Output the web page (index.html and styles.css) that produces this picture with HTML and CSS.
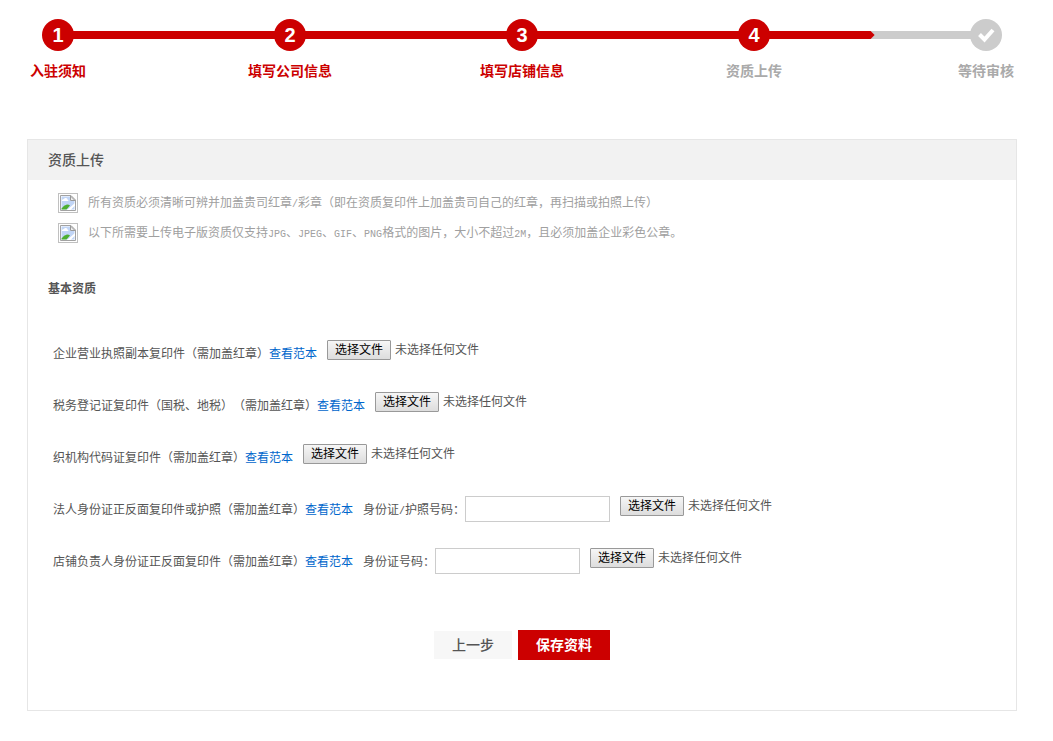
FILE: index.html
```html
<!DOCTYPE html>
<html lang="zh-CN">
<head>
<meta charset="utf-8">
<title>资质上传</title>
<link rel="stylesheet" href="styles.css">
</head>
<body>
<svg class="sprite" aria-hidden="true">
  <symbol id="picture" viewBox="0 0 20 20">
    <rect x=".5" y=".5" width="19" height="19" fill="#fff" stroke="#c0c0c0"/>
    <path d="M2.500 2.500H13L17.500 7V17.500H2.500Z" fill="#fff" stroke="#a2a2a2"/>
    <path d="M3.500 3.500H12V8H16.500V16.500H3.500Z" fill="#c1d5f6"/>
    <path d="M4 8V7Q5 6 6 6Q6.500 4.500 8 5Q9.500 5 9.500 6.500Q10.500 7 10.500 8Z" fill="#fff"/>
    <path d="M3.500 16.500V15.500Q6 12 9 11.500Q11 11.500 12 12.500L8.500 16.500Z" fill="#4caf30"/>
    <path d="M12.500 3V7.500H17Z" fill="#eee" stroke="#999"/>
    <path d="M9 17L17 10V12.500L12.500 17Z" fill="#fff"/>
  </symbol>
</svg>
<nav class="progress" aria-label="入驻进度">
  <div class="track"><div class="track-fill" style="width: 88%"></div></div>
  <ol class="steps">
    <li class="step done"><span class="dot">1</span><span class="step-name">入驻须知</span></li>
    <li class="step done"><span class="dot">2</span><span class="step-name">填写公司信息</span></li>
    <li class="step done"><span class="dot">3</span><span class="step-name">填写店铺信息</span></li>
    <li class="step" aria-current="step"><span class="dot">4</span><span class="step-name">资质上传</span></li>
    <li class="step waiting"><span class="dot"><svg viewBox="0 0 32 32" width="32" height="32" aria-hidden="true"><path d="M9.500 15.500L14.500 20.500L23 11" fill="none" stroke="#fff" stroke-width="4"/></svg></span><span class="step-name">等待审核</span></li>
  </ol>
</nav>
<main class="panel">
  <h1 class="panel-title">资质上传</h1>
  <ul class="notes">
    <li class="note"><svg class="note-icon" aria-hidden="true"><use href="#picture"/></svg><p>所有资质必须清晰可辨并加盖贵司红章<span class="half">/</span>彩章（即在资质复印件上加盖贵司自己的红章，再扫描或拍照上传）</p></li>
    <li class="note"><svg class="note-icon" aria-hidden="true"><use href="#picture"/></svg><p>以下所需要上传电子版资质仅支持<span class="half">JPG</span>、<span class="half">JPEG</span>、<span class="half">GIF</span>、<span class="half">PNG</span>格式的图片，大小不超过<span class="half">2M</span>，且必须加盖企业彩色公章。</p></li>
  </ul>
  <form class="form">
    <h2 class="section-title">基本资质</h2>
    <div class="rows">
      <div class="row">
        <div class="row-text"><span id="doc1">企业营业执照副本复印件（需加盖红章）</span><a href="#sample1">查看范本</a></div>
        <label class="file"><input type="file" aria-describedby="doc1"><span class="file-button">选择文件</span><span>未选择任何文件</span></label>
      </div>
      <div class="row">
        <div class="row-text"><span id="doc2">税务登记证复印件（国税、地税）（需加盖红章）</span><a href="#sample2">查看范本</a></div>
        <label class="file"><input type="file" aria-describedby="doc2"><span class="file-button">选择文件</span><span>未选择任何文件</span></label>
      </div>
      <div class="row">
        <div class="row-text"><span id="doc3">织机构代码证复印件（需加盖红章）</span><a href="#sample3">查看范本</a></div>
        <label class="file"><input type="file" aria-describedby="doc3"><span class="file-button">选择文件</span><span>未选择任何文件</span></label>
      </div>
      <div class="row">
        <div class="row-text"><span id="doc4">法人身份证正反面复印件或护照（需加盖红章）</span><a href="#sample4">查看范本</a></div>
        <div class="field"><label for="owner-id">身份证<span class="half">/</span>护照号码：</label><input class="text-box" type="text" id="owner-id"></div>
        <label class="file"><input type="file" aria-describedby="doc4"><span class="file-button">选择文件</span><span>未选择任何文件</span></label>
      </div>
      <div class="row">
        <div class="row-text"><span id="doc5">店铺负责人身份证正反面复印件（需加盖红章）</span><a href="#sample5">查看范本</a></div>
        <div class="field"><label for="manager-id">身份证号码：</label><input class="text-box" type="text" id="manager-id"></div>
        <label class="file"><input type="file" aria-describedby="doc5"><span class="file-button">选择文件</span><span>未选择任何文件</span></label>
      </div>
    </div>
    <div class="actions">
      <button class="button" type="button">上一步</button>
      <button class="button primary" type="submit">保存资料</button>
    </div>
  </form>
</main>
</body>
</html>
```
FILE: styles.css
```css
* {
  box-sizing: border-box;
}

body {
  margin: 0;
  padding: 19px 36px 30px 27px;
  background: #fff;
  color: #555;
  font: 12px/20px "Liberation Sans", "Noto Sans CJK SC", sans-serif;
  text-spacing-trim: space-all;
}

h1, h2, p, ul, ol {
  margin: 0;
  padding: 0;
  list-style: none;
}

a {
  color: #0066cc;
  text-decoration: none;
}

.sprite {
  display: none;
}

.progress {
  display: grid;
  margin: 0 -13px 58px;
}

.track,
.steps {
  grid-area: 1 / 1;
}

.track {
  height: 8px;
  margin: 12px 44px 0;
  background: #ccc;
}

.track-fill {
  height: 100%;
  background: #c00;
  clip-path: polygon(0 0, calc(100% - 4px) 0, 100% 50%, calc(100% - 4px) 100%, 0 100%);
}

.steps {
  z-index: 1;
  display: flex;
  justify-content: space-between;
}

.step {
  display: flex;
  flex-direction: column;
  align-items: center;
  gap: 10px;
  width: 88px;
  color: #aaa;
  font-size: 14px;
  font-weight: bold;
  white-space: nowrap;
}

.done {
  color: #c00;
}

.dot {
  display: flex;
  align-items: center;
  justify-content: center;
  width: 32px;
  height: 32px;
  border-radius: 50%;
  background: #c00;
  color: #fff;
  font-size: 20px;
}

.waiting .dot {
  background: #ccc;
}

.panel {
  border: 1px solid #e6e6e6;
}

.panel-title {
  padding: 0 20px;
  background: #f2f2f2;
  font-size: 14px;
  font-weight: 500;
  line-height: 40px;
}

.notes {
  padding: 8px 30px 0;
  color: #a0a0a0;
  line-height: 30px;
}

.note {
  display: flex;
  align-items: center;
  gap: 10px;
}

.note-icon {
  flex: none;
  width: 20px;
  height: 20px;
}

.half {
  font-family: "Liberation Mono", monospace;
  font-size: 10px;
  line-height: 1;
}

.form {
  padding: 31px 20px 50px;
}

.section-title {
  font-size: 12px;
  font-weight: bold;
}

.rows {
  display: grid;
  gap: 24px;
  padding: 41px 5px 54px;
}

.row {
  display: flex;
  flex-wrap: wrap;
  align-items: flex-start;
  gap: 10px;
  line-height: 28px;
}

.field {
  display: flex;
  align-items: flex-start;
}

.text-box {
  width: 145px;
  height: 26px;
  padding: 0 4px;
  border: 1px solid #ccc;
  font: inherit;
}

.file {
  display: flex;
  gap: 4px;
  line-height: 20px;
}

.file input {
  position: absolute;
  width: 1px;
  height: 1px;
  opacity: 0;
}

.file-button {
  padding: 0 7px;
  border: 1px solid #999;
  border-radius: 1px;
  background: linear-gradient(#f6f6f6, #ddd);
  color: #000;
  line-height: 18px;
}

.file input:focus-visible + .file-button {
  outline: 2px solid #06c;
}

.actions {
  display: flex;
  align-items: center;
  justify-content: center;
  gap: 6px;
}

.button {
  padding: 0 18px;
  border: 0;
  background: #f7f7f7;
  color: #555;
  font: 500 14px/28px "Liberation Sans", "Noto Sans CJK SC", sans-serif;
}

.primary {
  background: #c00;
  color: #fff;
  font-weight: bold;
  line-height: 30px;
}
```
